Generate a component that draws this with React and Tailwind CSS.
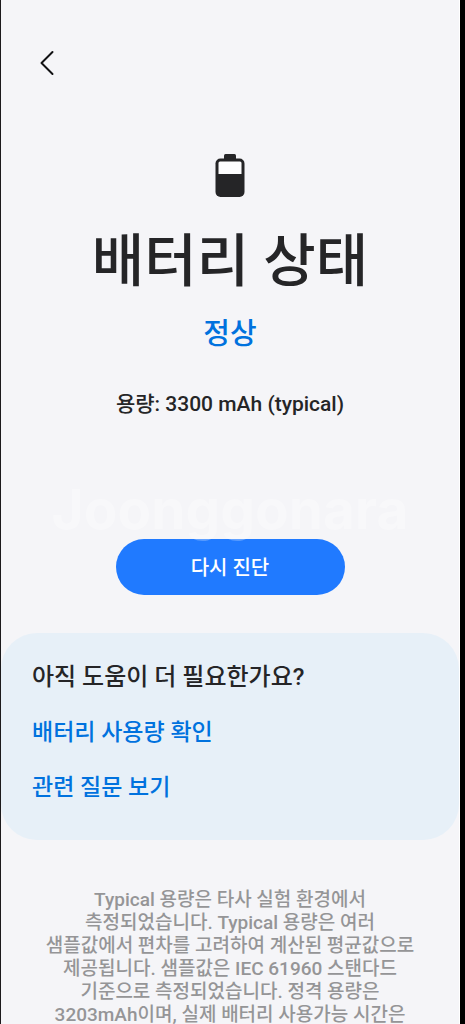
const NOTE_LINES = [
  'Typical 용량은 타사 실험 환경에서',
  '측정되었습니다. Typical 용량은 여러',
  '샘플값에서 편차를 고려하여 계산된 평균값으로',
  '제공됩니다. 샘플값은 IEC 61960 스탠다드',
  '기준으로 측정되었습니다. 정격 용량은',
  '3203mAh이며, 실제 배터리 사용가능 시간은',
];

function BatteryIcon() {
  return (
    <svg viewBox="0 0 30 44" className="h-11 w-[30px]" aria-hidden="true">
      <rect x="9" y="0" width="12" height="8" rx="1.5" fill="#252527" />
      <rect x="0.5" y="4.5" width="29" height="38.5" rx="5" fill="#252527" />
      <path d="M5 7.500h20a1.500 1.500 0 0 1 1.500 1.500V20h-23V9a1.500 1.500 0 0 1 1.500-1.500z" fill="#fdfdfe" />
    </svg>
  );
}

function Header() {
  return (
    <header className="flex h-[126px] items-center px-8">
      <button type="button" aria-label="뒤로" className="flex size-7 items-center justify-center">
        <svg viewBox="0 0 28 28" className="size-7" fill="none" stroke="#111113" strokeWidth="2" strokeLinecap="round" strokeLinejoin="round" aria-hidden="true">
          <path d="M19.500 3L8.500 14l11 11" />
        </svg>
      </button>
    </header>
  );
}

function HelpCard() {
  return (
    <section className="mt-[38px] flex flex-col items-start gap-5 rounded-[36px] bg-[#e7f0f8] px-[31px] pt-[27px] pb-[35px] text-[23px] leading-[35px] font-medium">
      <h2 className="text-2xl leading-[35px] text-[#252527]">아직 도움이 더 필요한가요?</h2>
      <a href="#usage" className="text-[#0072de]">배터리 사용량 확인</a>
      <a href="#faq" className="text-[#0072de]">관련 질문 보기</a>
    </section>
  );
}

export default function App() {
  return (
    <div className="h-screen overflow-y-auto border-l border-[#1c1a1c] bg-black pr-[5px] font-['Roboto','Noto_Sans_CJK_KR',sans-serif] [scrollbar-width:none]">
      <div className="min-h-full border-r border-white bg-[#f5f5f8]">
        <Header />
        <main>
          <section className="flex flex-col items-center pt-7 font-medium">
            <BatteryIcon />
            <h1 className="mt-6 text-[57px] leading-[80px] text-[#252527]">배터리 상태</h1>
            <p className="mt-[10px] text-[29px] leading-[44px] text-[#0072de]">정상</p>
            <p className="mt-[30px] text-[21px] leading-[36px] text-[#252527]">용량: 3300 mAh (typical)</p>
            <div className="relative mt-[117px] w-1/2">
              <span aria-hidden="true" className="absolute -top-[62px] left-1/2 z-10 -translate-x-1/2 font-['Inter',sans-serif] text-[55px] leading-[64px] font-bold whitespace-nowrap text-white/30">
                Joonggonara
              </span>
              <button type="button" className="h-14 w-full rounded-full bg-[#207aff] pt-[2px] text-xl text-white">
                다시 진단
              </button>
            </div>
          </section>
          <HelpCard />
          <p className="mt-12 text-center text-[19px] leading-[23px] font-medium text-[#959597]">
            {NOTE_LINES.map((line) => (
              <span key={line} className="block">{line}</span>
            ))}
          </p>
        </main>
      </div>
    </div>
  );
}
